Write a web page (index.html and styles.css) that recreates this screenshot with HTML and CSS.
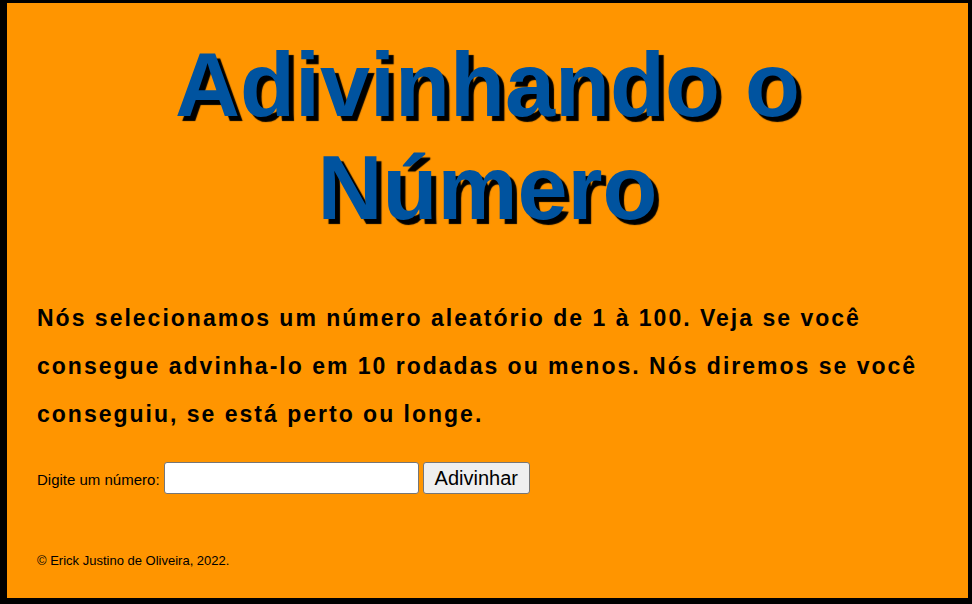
FILE: index.html
```html
<!DOCTYPE html>
<html lang="pt-BR">
<head>
<meta charset="utf-8">
<title>Adivinhando o Número</title>
<link rel="stylesheet" href="styles.css">
</head>
<body>
<main class="game">
  <h1 class="title">Adivinhando o Número</h1>
  <p class="intro">Nós selecionamos um número aleatório de 1 à 100. Veja se você consegue advinha-lo em 10 rodadas ou menos. Nós diremos se você conseguiu, se está perto ou longe.</p>
  <form class="guess">
    <label for="guess-field">Digite um número:</label>
    <input class="guess-field" id="guess-field" type="text">
    <button class="guess-submit" type="button">Adivinhar</button>
  </form>
  <footer class="credits">© Erick Justino de Oliveira, 2022.</footer>
</main>
</body>
</html>
```

FILE: styles.css
```css
* {
  box-sizing: border-box;
}

html {
  background: #000;
}

body {
  margin: 0;
  padding: 3px 4px 6px 7px;
  min-height: 100vh;
  display: flex;
  font-family: "Liberation Sans", Arial, sans-serif;
  color: #000;
}

.game {
  flex: 1;
  padding: 31px 30px 28px;
  background: #ff9500;
}

.title {
  margin: 0 0 54px;
  font-size: 90px;
  line-height: 103px;
  text-align: center;
  color: #00539f;
  text-shadow: 5px 5px 1px #000;
}

.intro {
  margin: 0 0 24px;
  font-size: 23px;
  font-weight: bold;
  line-height: 48px;
  letter-spacing: 2px;
}

.guess {
  display: flex;
  align-items: baseline;
  gap: 4px;
  font-size: 15px;
}

.guess-field {
  width: 255px;
  height: 32px;
  padding: 1px 2px;
  font: 20px "Liberation Sans", Arial, sans-serif;
  background: #fff;
  border: 1px solid #767676;
  border-radius: 3px;
}

.guess-submit {
  height: 32px;
  padding: 0 11px;
  font: 20px "Liberation Sans", Arial, sans-serif;
  color: #000;
  background: #efefef;
  border: 1px solid #767676;
  border-radius: 3px;
}

.credits {
  margin-top: 59px;
  font-size: 13px;
  line-height: 16px;
}
```
